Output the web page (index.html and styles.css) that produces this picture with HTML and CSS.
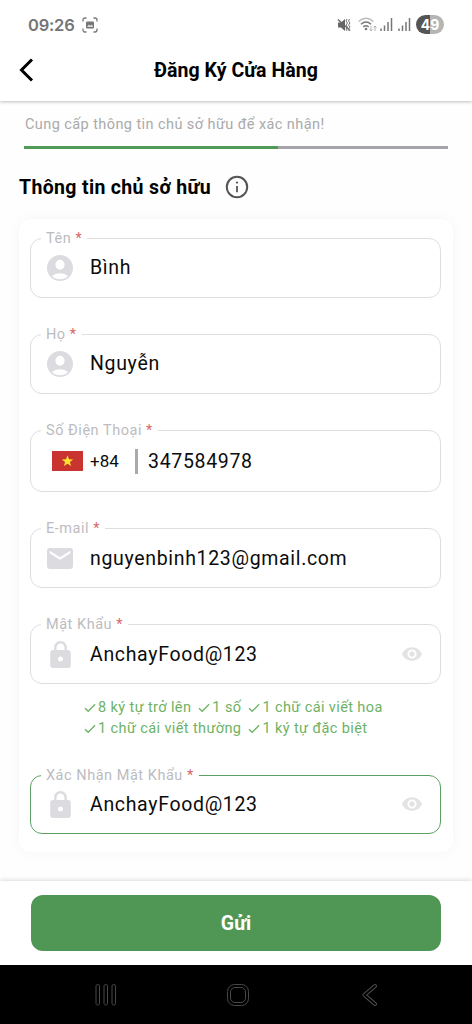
FILE: index.html
```html
<!DOCTYPE html>
<html lang="vi">
<head>
<meta charset="utf-8">
<title>Đăng Ký Cửa Hàng</title>
<link rel="stylesheet" href="styles.css">
</head>
<body>
<svg class="defs" width="0" height="0">
  <symbol id="user" viewBox="2 2 20 20"><path fill-rule="evenodd" d="M12 2a10 10 0 1 0 0 20a10 10 0 0 0 0-20zM12 5.600a3.500 3.900 0 1 1 0 7.800a3.500 3.900 0 0 1 0-7.800zM12 20.600c-2.400 0-4.500-.8-6.100-2.300c1.300-1.600 3.900-2.300 6.100-2.300s4.800.7 6.100 2.300c-1.600 1.500-3.700 2.300-6.100 2.300z"/></symbol>
  <symbol id="mail" viewBox="2 4 20 16"><path d="M20 4H4c-1.100 0-2 .9-2 2v12c0 1.100.9 2 2 2h16c1.100 0 2-.9 2-2V6c0-1.100-.9-2-2-2zm0 4l-8 5-8-5V6l8 5 8-5v2z"/></symbol>
  <symbol id="lock" viewBox="4 1 16 21"><path d="M18 8h-1V6c0-2.760-2.240-5-5-5S7 3.240 7 6v2H6c-1.100 0-2 .9-2 2v10c0 1.100.9 2 2 2h12c1.100 0 2-.9 2-2V10c0-1.100-.9-2-2-2zm-6 9c-1.100 0-2-.9-2-2s.9-2 2-2 2 .9 2 2-.9 2-2 2zm3.100-9H8.900V6c0-1.710 1.390-3.100 3.100-3.100 1.710 0 3.100 1.390 3.100 3.100v2z"/></symbol>
  <symbol id="eye" viewBox="1 4.500 22 15"><path d="M12 4.500C7 4.500 2.730 7.610 1 12c1.730 4.390 6 7.500 11 7.500s9.270-3.110 11-7.500c-1.730-4.390-6-7.500-11-7.500zM12 17c-2.760 0-5-2.240-5-5s2.240-5 5-5 5 2.240 5 5-2.240 5-5 5zm0-8c-1.660 0-3 1.340-3 3s1.340 3 3 3 3-1.340 3-3-1.340-3-3-3z"/></symbol>
  <symbol id="check" viewBox="0 0 12 10"><path d="M1 5.200l3.200 3.100L11.100 1.300" fill="none" stroke="currentColor" stroke-width="1.300"/></symbol>
  <symbol id="signal" viewBox="0 0 13 13"><path d="M1 10.500V13M4.500 7.500V13M8 4V13M11.500 0V13" fill="none" stroke="#777" stroke-width="1.500"/></symbol>
</svg>

<header class="top">
  <div class="status">
    <span class="clock">09:26</span>
    <svg class="capture" width="16" height="16" viewBox="0 0 16 16"><path d="M1 4.500V3q0-2 2-2h1.500M11.500 1H13q2 0 2 2v1.500M15 11.500V13q0 2-2 2h-1.500M4.500 15H3q-2 0-2-2v-1.500" fill="none" stroke="#777" stroke-width="1.300"/><rect x="4" y="4.500" width="8" height="7" rx="1.200" fill="#777"/><path d="M5 10l2-2.500 1.300 1.200L10 7.500l1 2.500z" fill="#ddd"/></svg>
    <div class="status-icons">
      <svg width="14" height="14" viewBox="0 0 14 14"><path d="M1 4.500h3L8 1v12L4 9.500H1z" fill="#666"/><path d="M1 1.500l12 11" stroke="#666" stroke-width="1.400"/><path d="M10 1l-1 2 1.500 2-1.500 2 1.500 2-1.500 2 1 2M12.500 1l-1 2 1.500 2-1.500 2 1.500 2-1.500 2 1 2" stroke="#777" fill="none" stroke-width="1"/></svg>
      <svg class="wifi" width="19" height="15" viewBox="0 0 19 15"><g fill="none" stroke-width="1.500"><path d="M.7 4.500q7.300-6.500 14.600 0" stroke="#bbb"/><path d="M3 7.200q5-4.500 10 0M5.300 9.900q2.700-2.300 5.400 0" stroke="#777"/></g><circle cx="8" cy="12" r="1.300" fill="#777"/><path d="M13 9v5m-1.500-1.500L13 14l1.500-1.500M17 14V9m-1.500 1.500L17 9l1.500 1.500" fill="none" stroke="#aaa" stroke-width=".9"/></svg>
      <svg class="signal" width="13" height="13"><use href="#signal"/></svg>
      <svg class="signal" width="13" height="13"><use href="#signal"/></svg>
      <span class="battery">49</span>
    </div>
  </div>
  <div class="appbar">
    <svg class="back" width="15" height="24" viewBox="0 0 15 24"><path d="M13 1.500L2.500 12 13 22.500" fill="none" stroke="#000" stroke-width="3"/></svg>
    <h1>Đăng Ký Cửa Hàng</h1>
  </div>
</header>

<main>
  <p class="hint">Cung cấp thông tin chủ sở hữu để xác nhận!</p>
  <div class="progress"><div class="progress-done"></div></div>
  <div class="section">
    <h2>Thông tin chủ sở hữu</h2>
    <svg width="24" height="24" viewBox="0 0 24 24"><circle cx="12" cy="12" r="10.200" fill="none" stroke="#555" stroke-width="2"/><path d="M12 11v6.200" stroke="#555" stroke-width="1.800"/><circle cx="12" cy="7.600" r="1.100" fill="#555"/></svg>
  </div>
  <form class="card">
    <fieldset>
      <legend>Tên <b>*</b></legend>
      <div class="row"><span class="lead"><svg width="26" height="26"><use href="#user"/></svg></span><span class="value">Bình</span></div>
    </fieldset>
    <fieldset>
      <legend>Họ <b>*</b></legend>
      <div class="row"><span class="lead"><svg width="26" height="26"><use href="#user"/></svg></span><span class="value">Nguyễn</span></div>
    </fieldset>
    <fieldset class="phone">
      <legend>Số Điện Thoại <b>*</b></legend>
      <div class="row">
        <svg class="flag" width="31" height="20" viewBox="0 0 31 20"><rect width="31" height="20" fill="#c93430"/><path d="M15.500 4.300l1.500 3.900 4.200.2-3.300 2.600 1.200 4-3.600-2.300-3.600 2.300 1.200-4-3.300-2.600 4.200-.2z" fill="#fbe32e"/></svg>
        <span class="code">+84</span><span class="divider"></span><span class="value">347584978</span>
      </div>
    </fieldset>
    <fieldset class="tall">
      <legend>E-mail <b>*</b></legend>
      <div class="row"><span class="lead"><svg width="26" height="21"><use href="#mail"/></svg></span><span class="value">nguyenbinh123@gmail.com</span></div>
    </fieldset>
    <fieldset class="tall">
      <legend>Mật Khẩu <b>*</b></legend>
      <div class="row"><span class="lead"><svg width="21" height="27"><use href="#lock"/></svg></span><span class="value">AnchayFood@123</span><svg class="eye" width="20" height="14"><use href="#eye"/></svg></div>
    </fieldset>
    <div class="rules">
      <div class="rule-line">
        <span><svg width="12" height="10"><use href="#check"/></svg>8 ký tự trở lên</span>
        <span><svg width="12" height="10"><use href="#check"/></svg>1 số</span>
        <span><svg width="12" height="10"><use href="#check"/></svg>1 chữ cái viết hoa</span>
      </div>
      <div class="rule-line">
        <span><svg width="12" height="10"><use href="#check"/></svg>1 chữ cái viết thường</span>
        <span><svg width="12" height="10"><use href="#check"/></svg>1 ký tự đặc biệt</span>
      </div>
    </div>
    <fieldset class="focused">
      <legend>Xác Nhận Mật Khẩu <b>*</b></legend>
      <div class="row"><span class="lead"><svg width="21" height="27"><use href="#lock"/></svg></span><span class="value">AnchayFood@123</span><svg class="eye" width="20" height="14"><use href="#eye"/></svg></div>
    </fieldset>
  </form>
</main>

<footer class="actions"><button type="button">Gửi</button></footer>
<nav class="navbar">
  <svg width="22" height="24" viewBox="0 0 22 24"><g fill="none" stroke="#484848" stroke-width="1"><rect x="1" y="1.500" width="3.500" height="20.500" rx="1.700"/><rect x="9" y="1.500" width="3.500" height="20.500" rx="1.700"/><rect x="17" y="1.500" width="3.500" height="20.500" rx="1.700"/></g></svg>
  <svg width="24" height="24" viewBox="0 0 24 24"><g fill="none" stroke="#484848" stroke-width="1"><rect x="1.500" y="1.500" width="21" height="21" rx="7"/><rect x="4.500" y="4.500" width="15" height="15" rx="4.500"/></g></svg>
  <svg width="17" height="24" viewBox="0 0 17 24"><path d="M14 3L3.500 12 14 21" fill="none" stroke="#505050" stroke-width="4" stroke-linecap="round" stroke-linejoin="round"/><path d="M14 3L3.500 12 14 21" fill="none" stroke="#000" stroke-width="2" stroke-linecap="round"/></svg>
</nav>
</body>
</html>
```
FILE: styles.css
```css
* { box-sizing: border-box; }
body {
  margin: 0;
  width: 472px;
  height: 1024px;
  display: flex;
  flex-direction: column;
  overflow: hidden;
  background: #fefefe;
  color: #0c0c0c;
  font-family: Roboto, "Noto Sans", sans-serif;
}
svg { display: block; flex: none; }
.defs { position: absolute; }

.top {
  height: 101px;
  flex: none;
  background: #fff;
  box-shadow: 0 1px 3px rgba(0, 0, 0, .25);
}
.status {
  height: 49px;
  padding: 0 28px;
  display: flex;
  align-items: center;
}
.clock {
  width: 47px;
  font: 600 16.500px/20px Inter, sans-serif;
  letter-spacing: -.2px;
  color: #757575;
}
.capture { margin-left: 7px; }
.status-icons { margin-left: auto; display: flex; align-items: center; }
.wifi { margin-left: 7px; }
.signal { margin-left: 3px; }
.signal + .signal { margin-left: 5px; }
.battery {
  width: 28px;
  height: 19px;
  margin-left: 5px;
  border-radius: 10px;
  background: linear-gradient(90deg, #555 49%, #b5b5b5 49%);
  color: #fff;
  font: 700 14px/19px Inter, sans-serif;
  text-align: center;
}
.appbar {
  height: 42px;
  display: grid;
  grid-template-columns: 60px 1fr 60px;
  align-items: center;
}
.back { margin-left: 19px; }
h1 { margin: 0; text-align: center; font-size: 19.500px; font-weight: 700; letter-spacing: .05px; color: #000; }

main { flex: 1; min-height: 0; padding: 15px 19px 0; }
.hint {
  margin: 0 6px;
  font-size: 14.500px;
  line-height: 18px;
  letter-spacing: .42px;
  color: #aaa;
}
.progress { height: 3px; margin: 12px 5px 0; background: #a5a4aa; }
.progress-done { width: 60%; height: 3px; background: #509b58; }
.section { height: 24px; margin-top: 26px; display: flex; align-items: center; gap: 14px; }
h2 { margin: 0; font-size: 19.500px; font-weight: 700; letter-spacing: .34px; color: #000; }

.card {
  height: 633px;
  margin-top: 20px;
  padding: 11px 12px 0 11px;
  border-radius: 12px;
  background: #fff;
  box-shadow: 0 0 14px rgba(0, 0, 0, .04);
}
fieldset {
  height: 68px;
  min-width: 0;
  margin: 0 0 28px;
  padding: 0 18px 0 10px;
  border: 1px solid #dedede;
  border-radius: 12px;
}
legend {
  padding: 0 5px;
  font-size: 14.500px;
  line-height: 17px;
  letter-spacing: .53px;
  color: #bcbcc0;
}
legend b { font-weight: 400; color: #d9666b; }
.row { height: 41px; display: flex; align-items: center; }
.lead { width: 38px; margin-right: 11px; display: flex; justify-content: center; fill: #dcdce0; }
.value { font-size: 19.500px; letter-spacing: .67px; }
.eye { margin-left: auto; fill: #e3e3e3; }
.phone { height: 70px; }
.phone .row { padding-left: 11px; height: 44px; }
.tall .row { height: 42px; }
.code { width: 31px; margin-left: 7px; font-size: 17px; }
.divider { width: 3px; height: 25px; margin: 0 10px 0 14px; background: #aaa; }
.focused { height: 67px; margin: 0; border-color: #5c9f63; }
.focused .row { height: 40px; }
.rules { margin: -15px 0 28px 54px; color: #6db265; font-size: 14.500px; letter-spacing: .39px; }
.rule-line { height: 21px; display: flex; align-items: center; gap: 7px; white-space: nowrap; }
.rule-line span { display: flex; align-items: center; gap: 2px; }

.actions {
  height: 84px;
  flex: none;
  padding: 14px 31px 0;
  background: #fff;
  box-shadow: 0 -1px 4px rgba(0, 0, 0, .14);
}
button {
  width: 100%;
  height: 56px;
  border: 0;
  border-radius: 12px;
  background: #509755;
  color: #fff;
  font: 700 19.500px Roboto, sans-serif;
}
.navbar {
  height: 59px;
  flex: none;
  padding: 0 94px 0 95px;
  display: grid;
  grid-template-columns: 131px 1fr auto;
  align-items: center;
  background: #000;
}
```
